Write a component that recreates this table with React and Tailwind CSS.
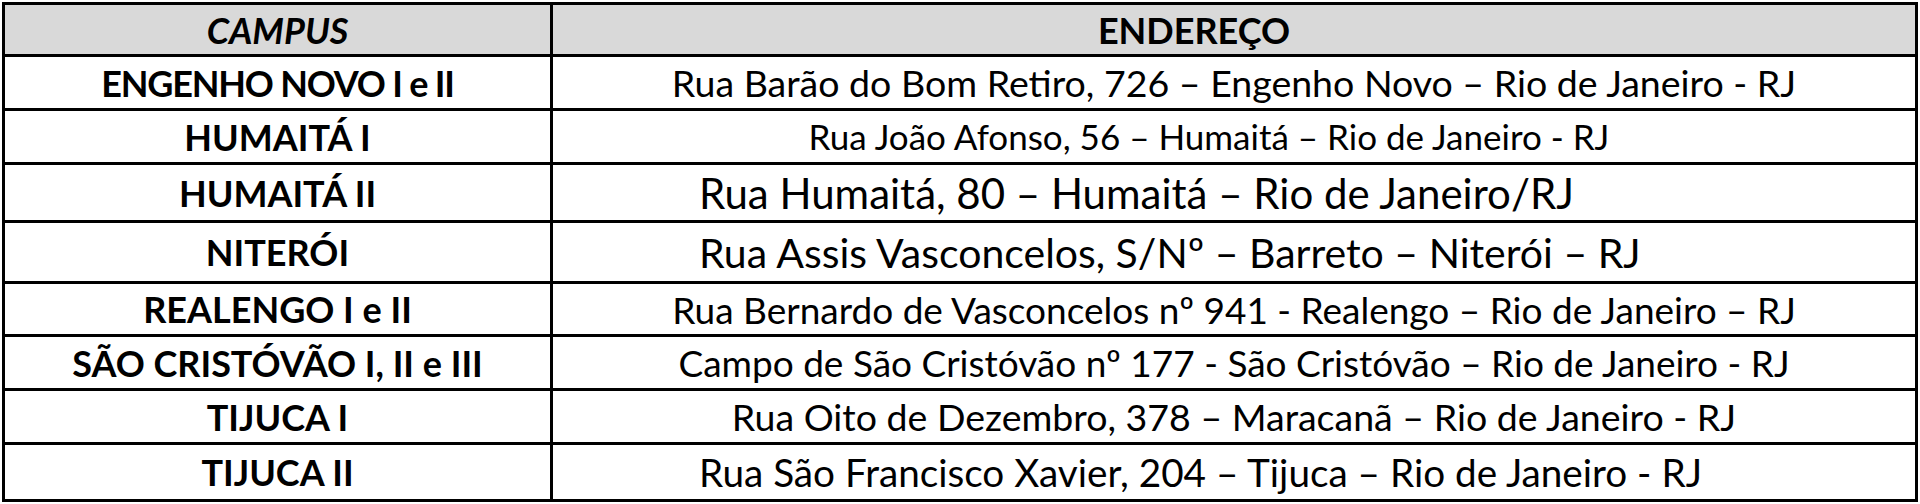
const rows = [
  { campus: 'ENGENHO NOVO I e II', addr: 'Rua Barão do Bom Retiro, 726 – Engenho Novo – Rio de Janeiro - RJ', h: 'h-[51px]', cls: 'tracking-[-1.2px]', acls: 'justify-center text-[37.5px]' },
  { campus: 'HUMAITÁ I', addr: 'Rua João Afonso, 56 – Humaitá – Rio de Janeiro - RJ', h: 'h-[51px]', acls: 'justify-center pr-[50px] text-[35px]' },
  { campus: 'HUMAITÁ II', addr: 'Rua Humaitá, 80 – Humaitá – Rio de Janeiro/RJ', h: 'h-[55px]', acls: 'pl-[146px] text-[42px]' },
  { campus: 'NITERÓI', addr: 'Rua Assis Vasconcelos, S/Nº – Barreto – Niterói – RJ', h: 'h-[58px]', acls: 'pl-[146px] text-[41px]' },
  { campus: 'REALENGO I e II', addr: 'Rua Bernardo de Vasconcelos nº 941 - Realengo – Rio de Janeiro – RJ', h: 'h-[50px]', acls: 'justify-center text-[37px]' },
  { campus: 'SÃO CRISTÓVÃO I, II e III', addr: 'Campo de São Cristóvão nº 177 - São Cristóvão – Rio de Janeiro - RJ', h: 'h-[51px]', acls: 'justify-center text-[37px]' },
  { campus: 'TIJUCA I', addr: 'Rua Oito de Dezembro, 378 – Maracanã – Rio de Janeiro - RJ', h: 'h-[51px]', acls: 'justify-center text-[37.5px]' },
  { campus: 'TIJUCA II', addr: 'Rua São Francisco Xavier, 204 – Tijuca – Rio de Janeiro - RJ', h: 'h-[54px]', acls: 'pl-[146px] text-[38.7px]' },
]

export default function App() {
  return (
    <div className="w-[1920px] h-[504px] bg-white pt-[2px] pl-[2px] font-['Lato','Liberation_Sans',sans-serif] text-black">
      <div className="w-[1916px] bg-black p-[3px] grid grid-cols-[545px_1fr] gap-[3px]">
        {/* cabeçalho */}
        <div className="h-[49px] bg-[#d9d9d9] flex items-center justify-center text-[36px] font-bold italic leading-none">
          CAMPUS
        </div>
        <div className="h-[49px] bg-[#d9d9d9] flex items-center justify-center pr-[80px] text-[36px] font-bold leading-none">
          ENDEREÇO
        </div>

        {rows.map((r) => (
          <Row key={r.campus} {...r} />
        ))}
      </div>
    </div>
  )
}

function Row({ campus, addr, h, cls = '', acls }) {
  return (
    <>
      <div className={`${h} ${cls} bg-white flex items-center justify-center text-[36px] font-bold leading-none whitespace-nowrap`}>
        {campus}
      </div>
      <div className={`${h} ${acls} bg-white flex items-center leading-none whitespace-nowrap`}>
        {addr}
      </div>
    </>
  )
}
